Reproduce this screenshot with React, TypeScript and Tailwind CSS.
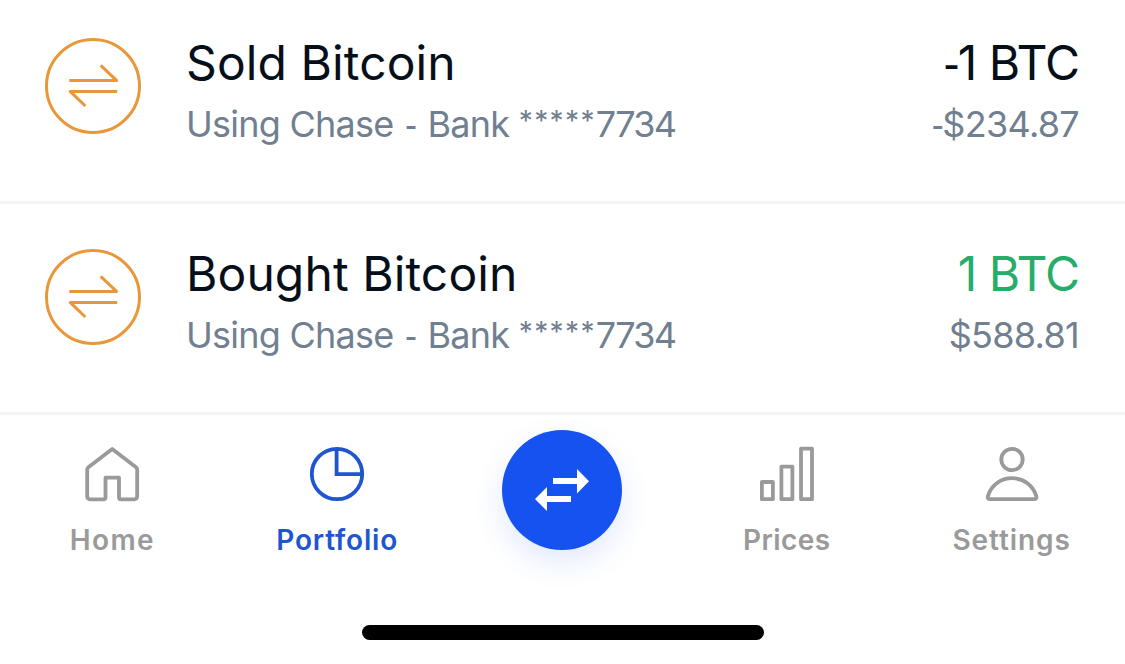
import type { ReactNode } from 'react'
import clsx from 'clsx'

interface Transaction {
  title: string
  method: string
  bank: string
  account: string
  amount: string
  value: string
  positive: boolean
}

const transactions: Transaction[] = [
  {
    title: 'Sold Bitcoin',
    method: 'Using Chase ',
    bank: ' Bank ',
    account: '7734',
    amount: '-1 BTC',
    value: '-$234.87',
    positive: false,
  },
  {
    title: 'Bought Bitcoin',
    method: 'Using Chase ',
    bank: ' Bank ',
    account: '7734',
    amount: '1 BTC',
    value: '$588.81',
    positive: true,
  },
]

function ExchangeIcon() {
  return (
    <svg className="mt-[5px] size-24 shrink-0" viewBox="0 0 96 96" fill="none" stroke="#e8983a" strokeWidth="3">
      <circle cx="48" cy="48" r="46.5" />
      <path d="M24.3 42.4H71.5L55.7 27.4M72.2 53.4H25.2L40.3 68" strokeLinejoin="round" />
    </svg>
  )
}

function HomeIcon() {
  return (
    <svg className="size-14" viewBox="0 0 56 56" fill="none" stroke="currentColor" strokeWidth="3.8" strokeLinejoin="round">
      <path d="M21.5 31.7H35V51.3a2 2 0 0 0 2 2H50.5a2.7 2.7 0 0 0 2.7-2.7V23.6a3 3 0 0 0-1.2-2.4L28.2 3 4.4 21.2a3 3 0 0 0-1.2 2.4V50.6a2.7 2.7 0 0 0 2.7 2.7H19.5a2 2 0 0 0 2-2Z" />
    </svg>
  )
}

function PortfolioIcon() {
  return (
    <svg className="size-14" viewBox="0 0 56 56" fill="none" stroke="currentColor" strokeWidth="3.8">
      <circle cx="28" cy="28" r="25.2" />
      <path d="M27.6 3V28.2H53" />
    </svg>
  )
}

function PricesIcon() {
  return (
    <svg className="size-14" viewBox="0 0 56 56" fill="none" stroke="currentColor" strokeWidth="3.8" strokeLinejoin="round">
      <rect x="2.9" y="36" width="11" height="17.2" />
      <rect x="22.4" y="20.6" width="11" height="32.6" />
      <rect x="42" y="2.7" width="11" height="50.5" />
    </svg>
  )
}

function SettingsIcon() {
  return (
    <svg className="size-14" viewBox="0 0 56 56" fill="none" stroke="currentColor" strokeWidth="3.8" strokeLinejoin="round">
      <circle cx="28" cy="13.5" r="10.7" />
      <path d="M5.8 53.2H50.4a2 2 0 0 0 2-2.6C49.4 39.4 39.6 32.2 28.1 32.2S6.8 39.4 3.8 50.6a2 2 0 0 0 2 2.6Z" />
    </svg>
  )
}

// Inter's hyphen is too long here
function Hyphen({ className }: { className?: string }) {
  return <span className={clsx("font-['Liberation_Sans',sans-serif] leading-none", className)}>-</span>
}

function Figure({ text }: { text: string }) {
  const negative = text.startsWith('-')
  return (
    <>
      {negative && <Hyphen className="tracking-[-0.04em]" />}
      {negative ? text.slice(1) : text}
    </>
  )
}

function TransactionRow({ title, method, bank, account, amount, value, positive }: Transaction) {
  return (
    <li className="flex h-[211px] border-b-[3px] border-[#f3f4f5] pt-10 pl-[45px] pr-[46px] first:h-[204px] first:pt-[33px]">
      <ExchangeIcon />
      <div className="ml-[45px] flex flex-1 flex-col gap-[9px] whitespace-nowrap">
        <p className="text-[48px] leading-[60px] tracking-[0.1px] text-[#050f1a]">{title}</p>
        <p className="h-[44px] text-[36px] leading-[44px] tracking-[-0.75px] text-[#708090]">
          {method}
          <Hyphen className="mx-[2px]" />
          {bank}
          <span className="align-[6px] text-[28px] leading-none tracking-[1.4px]">*****</span>
          <span className="tracking-[-1.7px]">{account}</span>
        </p>
      </div>
      <div className="flex flex-col items-end gap-[9px] whitespace-nowrap">
        <p
          className={clsx(
            'h-[60px] text-[48px] leading-[60px] tracking-[-1px]',
            positive ? 'text-[#27ad6a]' : 'text-[#050f1a]'
          )}
        >
          <Figure text={amount} />
        </p>
        <p className="h-[44px] text-[36px] leading-[44px] tracking-[-0.7px] text-[#708090]">
          <Figure text={value} />
        </p>
      </div>
    </li>
  )
}

interface TabProps {
  label: string
  active?: boolean
  className?: string
  children: ReactNode
}

function Tab({ label, active, className, children }: TabProps) {
  return (
    <button
      className={clsx(
        'flex flex-1 flex-col items-center gap-5 pt-[31px]',
        active ? 'text-[#1f55d0]' : 'text-[#9a9a9a]',
        className
      )}
    >
      {children}
      <span className="text-[28px] leading-9 font-semibold">{label}</span>
    </button>
  )
}

export default function App() {
  return (
    <div className="flex h-[664px] w-[1125px] flex-col overflow-hidden bg-white font-['Inter','Liberation_Sans',sans-serif]">
      <ul>
        {transactions.map(t => (
          <TransactionRow key={t.title} {...t} />
        ))}
      </ul>
      <nav className="flex h-[210px] items-start pr-px">
        <Tab label="Home" className="tracking-[1.4px]">
          <HomeIcon />
        </Tab>
        <Tab label="Portfolio" active className="tracking-[0.8px]">
          <PortfolioIcon />
        </Tab>
        <div className="flex flex-1 justify-center pt-[15px]">
          <button className="size-[120px] rounded-full bg-[#1652f0] shadow-[0_12px_30px_rgba(22,82,240,0.13)]">
            <svg className="size-full" viewBox="0 0 120 120" fill="#fff">
              <path d="M51 48H75V39L87 51.2 75 63.5V54H51ZM69 66H45V57L33 69 45 81V72H69Z" />
            </svg>
          </button>
        </div>
        <Tab label="Prices" className="tracking-[0.4px]">
          <PricesIcon />
        </Tab>
        <Tab label="Settings" className="tracking-[0.9px]">
          <SettingsIcon />
        </Tab>
      </nav>
      <div className="ml-[362px] h-[15px] w-[402px] rounded-full bg-black" />
    </div>
  )
}
